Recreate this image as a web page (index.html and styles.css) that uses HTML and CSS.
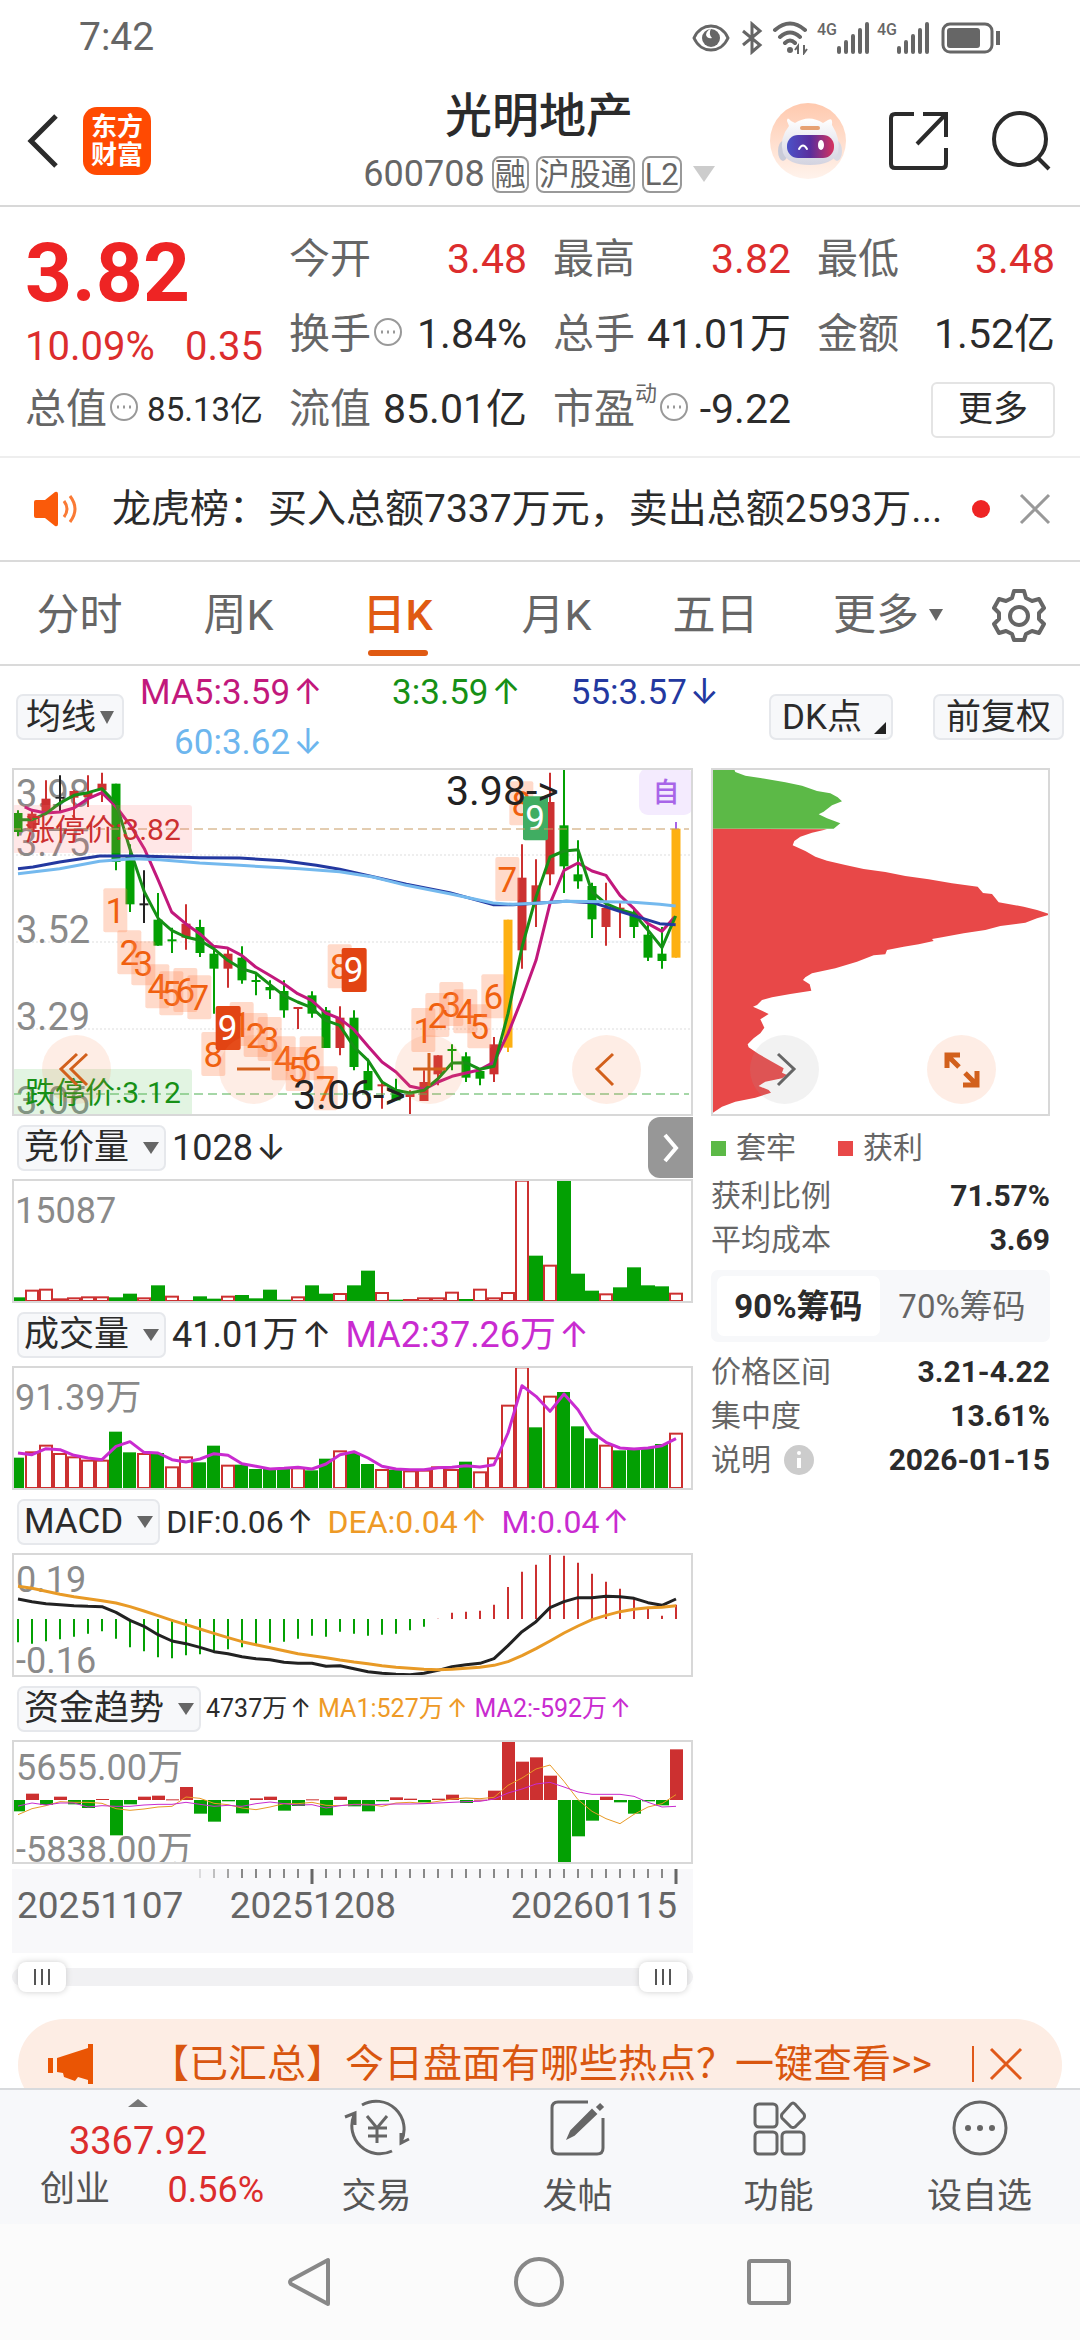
FILE: index.html
```html
<!DOCTYPE html>
<html lang="zh-CN">
<head>
<meta charset="utf-8">
<meta name="viewport" content="width=device-width, initial-scale=1">
<title>光明地产 600708</title>
<link rel="stylesheet" href="styles.css">
</head>
<body>
<div class="app">
  <div class="status">
    <span class="clock">7:42</span>
    <div class="status-icons">
      <svg width="38" height="28" viewBox="0 0 38 28"><path d="M2 14C9-2 29-2 36 14 29 30 9 30 2 14Z" fill="none" stroke="#666" stroke-width="3"/><circle cx="19" cy="14" r="9" fill="#666"/><path d="M19 5a7 7 0 0 0 1 9 5 5 0 0 1-6-3 7 7 0 0 1 5-6Z" fill="#fff"/></svg>
      <svg class="bt" width="22" height="34" viewBox="0 0 22 34"><path d="M2 10 19 24 11 31V3L19 10 2 24" fill="none" stroke="#666" stroke-width="3"/></svg>
      <svg width="38" height="34" viewBox="0 0 38 34"><g fill="none" stroke="#666" stroke-width="4" stroke-linecap="round"><path d="M3 9Q18-4 33 9M8 16Q18 7 28 16M13 22q5-5 10 0"/></g><circle cx="18" cy="29" r="3" fill="#666"/><path d="M26 33V25l-3 4M32 24v8l3-4" fill="none" stroke="#666" stroke-width="2"/></svg>
      <div class="signal"><span>4G</span><svg width="33" height="32" viewBox="0 0 33 32"><path d="M2 26v4M9 20v10M16 14v16M23 8v22M30 2v28" stroke="#666" stroke-width="4" stroke-linecap="round"/></svg></div>
      <div class="signal"><span>4G</span><svg width="33" height="32" viewBox="0 0 33 32"><path d="M2 26v4M9 20v10M16 14v16M23 8v22M30 2v28" stroke="#666" stroke-width="4" stroke-linecap="round"/></svg></div>
      <svg width="60" height="32" viewBox="0 0 60 32"><rect x="2" y="2" width="49" height="28" rx="7" fill="none" stroke="#666" stroke-width="3"/><rect x="6" y="6" width="33" height="20" rx="3" fill="#666"/><path d="M57 9v14" stroke="#666" stroke-width="4"/></svg>
    </div>
  </div>

  <header class="topbar">
    <div class="topbar-left">
      <button class="plain" aria-label="返回"><svg width="34" height="56" viewBox="0 0 34 56"><path d="M30 3 5 28 30 53" fill="none" stroke="#2b2b2b" stroke-width="5"/></svg></button>
      <div class="logo"><span>东方</span><span>财富</span></div>
    </div>
    <div class="stock">
      <h1>光明地产</h1>
      <div class="stock-code"><span>600708</span><i>融</i><i>沪股通</i><i>L2</i><svg width="22" height="16" viewBox="0 0 22 16"><path d="M0 0h22L11 16Z" fill="#ccc"/></svg></div>
    </div>
    <div class="topbar-right">
      <button class="plain" aria-label="智能助手"><svg width="76" height="76" viewBox="0 0 76 76">
        <defs><linearGradient id="halo" x1="0" y1="0" x2="0" y2="1"><stop offset="0" stop-color="#ffc9ae"/><stop offset="1" stop-color="#fff3ec"/></linearGradient><linearGradient id="visor" x1="0" y1="0" x2="1" y2="0"><stop offset="0" stop-color="#4b52c8"/><stop offset=".5" stop-color="#5a2d9c"/><stop offset="1" stop-color="#d6335e"/></linearGradient><linearGradient id="helmet" x1="0" y1="0" x2="0" y2="1"><stop offset="0" stop-color="#fff"/><stop offset="1" stop-color="#d3d3e0"/></linearGradient></defs>
        <circle cx="38" cy="38" r="38" fill="url(#halo)"/><ellipse cx="13" cy="48" rx="5" ry="10" fill="#c9cbd8"/><ellipse cx="67" cy="48" rx="5" ry="10" fill="#d9dae4"/>
        <path d="M17 18q0-5 4 0l4 2q14-9 28 0l5-3q5-3 4 5 9 14 6 28-6 12-28 12T13 50q-4-15 6-27Z" fill="url(#helmet)"/><rect x="17" y="32" width="47" height="23" rx="11" fill="url(#visor)"/><rect x="30" y="23" width="20" height="4" rx="2" fill="#e6a173"/><path d="M29 46q4-7 8 0" stroke="#fff" stroke-width="2" fill="none" stroke-linecap="round"/><ellipse cx="51" cy="42" rx="3" ry="5" fill="#fff"/></svg></button>
      <button class="plain" aria-label="分享"><svg width="60" height="60" viewBox="0 0 60 60"><path d="M25 3H6Q2 3 2 7V53Q2 57 6 57H53Q57 57 57 53V37M34 3H57V26M56 4 28 33" fill="none" stroke="#2b2b2b" stroke-width="4"/></svg></button>
      <button class="plain" aria-label="搜索"><svg width="60" height="62" viewBox="0 0 60 62"><circle cx="28" cy="29" r="26" fill="none" stroke="#2b2b2b" stroke-width="4"/><path d="m46 48 11 11" stroke="#2b2b2b" stroke-width="4"/></svg></button>
    </div>
  </header>

  <main>
    <section class="quote">
      <div class="price"><strong>3.82</strong><div><span>10.09%</span><span>0.35</span></div></div>
      <div class="cell"><span>今开</span><b class="red">3.48</b></div>
      <div class="cell"><span>最高</span><b class="red">3.82</b></div>
      <div class="cell"><span>最低</span><b class="red">3.48</b></div>
      <div class="cell"><span>换手<svg class="dots" viewBox="0 0 30 30"><use href="#dots"/></svg></span><b>1.84%</b></div>
      <div class="cell"><span>总手</span><b>41.01万</b></div>
      <div class="cell"><span>金额</span><b>1.52亿</b></div>
      <div class="cell"><span>总值<svg class="dots" viewBox="0 0 30 30"><use href="#dots"/></svg></span><b class="small">85.13亿</b></div>
      <div class="cell"><span>流值</span><b>85.01亿</b></div>
      <div class="cell"><span>市盈<sup>动</sup><svg class="dots" viewBox="0 0 30 30"><g id="dots"><circle cx="15" cy="15" r="13" fill="none" stroke="#999" stroke-width="2"/><path d="M8 15h2M14 15h2M20 15h2" stroke="#999" stroke-width="3"/></g></svg></span><b>-9.22</b></div>
      <div class="cell end"><button class="more">更多</button></div>
    </section>

    <section class="news">
      <svg width="44" height="36" viewBox="0 0 44 36"><path d="M2 9h9L21 1q3-1 3 2V33q0 3-3 2L11 27H2Q0 27 0 25V11Q0 9 2 9Z" fill="#fa5a0a"/><path d="M30 10q6 8 0 16M36 5q10 13 0 26" fill="none" stroke="#fa7a35" stroke-width="3"/></svg>
      <a href="#news">龙虎榜：买入总额7337万元，卖出总额2593万...</a>
      <span class="dot"></span>
      <button class="plain" aria-label="关闭"><svg width="32" height="32" viewBox="0 0 32 32"><path d="m2 2 28 28M30 2 2 30" stroke="#999" stroke-width="3"/></svg></button>
    </section>

    <nav class="tabs">
      <button>分时</button><button>周K</button><button class="active">日K</button><button>月K</button><button>五日</button>
      <button>更多<svg width="14" height="12" viewBox="0 0 14 12"><path d="M0 0h14L7 12Z" fill="#666"/></svg></button>
      <button aria-label="设置"><svg width="54" height="54" viewBox="0 0 54 54"><path d="M22 3h10l2 7 6 3 7-2 5 9-5 5v6l5 5-5 9-7-2-6 3-2 6H22l-2-6-6-3-7 2-5-9 5-5v-6l-5-5 5-9 7 2 6-3Z" fill="none" stroke="#666" stroke-width="4" stroke-linejoin="round"/><circle cx="27" cy="28" r="9" fill="none" stroke="#666" stroke-width="4"/></svg></button>
    </nav>

    <section class="toolbar">
      <button class="chip">均线<svg width="14" height="13" viewBox="0 0 14 13"><path d="M0 0h14L7 13Z" fill="#666"/></svg></button>
      <div class="averages">
        <span class="magenta">MA5:3.59<em>↑</em></span><span class="green">3:3.59<em>↑</em></span><span class="blue">55:3.57<em>↓</em></span>
        <span class="sky">60:3.62<em>↓</em></span>
      </div>
      <button class="chip dk">DK点<svg width="12" height="12" viewBox="0 0 12 12"><path d="M12 0v12H0Z" fill="#222"/></svg></button>
      <button class="chip">前复权</button>
    </section>

    <section class="board">
      <div class="charts">
        <div class="chart-box">
          <svg id="kline" class="chart" viewBox="0 0 681 348"></svg>
          <div class="chart-tools">
            <button class="round" aria-label="快速后退"><svg viewBox="0 0 69 69"><path d="M35 19 19 34 35 50M45 19 29 34 45 50"/></svg></button>
            <button class="round" aria-label="缩小"><svg viewBox="0 0 69 69"><path d="M18 34H51"/></svg></button>
            <button class="round" aria-label="放大"><svg viewBox="0 0 69 69"><path d="M18 34H51M34 18V51"/></svg></button>
            <button class="round" aria-label="后退"><svg viewBox="0 0 69 69"><path d="M41 19 25 34 41 50"/></svg></button>
          </div>
        </div>
        <div class="indicator">
          <button class="chip">竞价量<svg width="16" height="12" viewBox="0 0 16 12"><path d="M0 0h16L8 12Z" fill="#666"/></svg></button><span>1028<em>↓</em></span>
          <button class="drawer" aria-label="收起"><svg width="18" height="30" viewBox="0 0 18 30"><path d="M3 2 14 15 3 28" fill="none" stroke="#fff" stroke-width="4"/></svg></button>
        </div>
        <svg id="auction" class="chart" viewBox="0 0 681 124"></svg>
        <div class="indicator">
          <button class="chip">成交量<svg width="16" height="12" viewBox="0 0 16 12"><path d="M0 0h16L8 12Z" fill="#666"/></svg></button><span>41.01万<em>↑</em></span><span class="violet">MA2:37.26万<em>↑</em></span>
        </div>
        <svg id="volume" class="chart" viewBox="0 0 681 124"></svg>
        <div class="indicator mid">
          <button class="chip">MACD<svg width="16" height="12" viewBox="0 0 16 12"><path d="M0 0h16L8 12Z" fill="#666"/></svg></button><span>DIF:0.06<em>↑</em></span><span class="orange">DEA:0.04<em>↑</em></span><span class="violet">M:0.04<em>↑</em></span>
        </div>
        <svg id="macd" class="chart" viewBox="0 0 681 124"></svg>
        <div class="indicator narrow">
          <button class="chip">资金趋势<svg width="16" height="12" viewBox="0 0 16 12"><path d="M0 0h16L8 12Z" fill="#666"/></svg></button><span>4737万<em>↑</em></span><span class="orange">MA1:527万<em>↑</em></span><span class="violet">MA2:-592万<em>↑</em></span>
        </div>
        <svg id="capital" class="chart" viewBox="0 0 681 124"></svg>
        <svg id="axis" class="axis" viewBox="0 0 681 84"></svg>
        <div class="range"><span class="thumb"></span><span class="thumb"></span></div>
      </div>

      <aside>
        <div class="chart-box">
          <svg id="chips" class="chart" viewBox="0 0 339 348"></svg>
          <div class="chart-tools chips-tools">
            <button class="round grey" aria-label="前进"><svg viewBox="0 0 69 69"><path d="M28 19 44 34 28 50"/></svg></button>
            <button class="round expand" aria-label="全屏"><svg viewBox="0 0 69 69"><path d="M32 32 20 20M20 33V20H33M38 38 50 50M50 36V50H36"/></svg></button>
          </div>
        </div>
        <div class="legend"><span>套牢</span><span class="gain">获利</span></div>
        <dl><div><dt>获利比例</dt><dd>71.57%</dd></div><div><dt>平均成本</dt><dd>3.69</dd></div></dl>
        <div class="toggle"><button class="on">90%筹码</button><button>70%筹码</button></div>
        <dl><div><dt>价格区间</dt><dd>3.21-4.22</dd></div><div><dt>集中度</dt><dd>13.61%</dd></div>
        <div><dt>说明<svg width="30" height="30" viewBox="0 0 30 30"><circle cx="15" cy="15" r="15" fill="#ccc"/><circle cx="15" cy="8" r="2" fill="#fff"/><path d="M15 13v10" stroke="#fff" stroke-width="4"/></svg></dt><dd>2026-01-15</dd></div></dl>
      </aside>
    </section>

    <section class="banner">
      <svg width="46" height="40" viewBox="0 0 46 40"><path d="M0 14h5v15H0ZM9 14 40 4V0h5V40H40V36L30 33l-3 4-11-4-1-4-6-1Z" fill="#ea5504"/></svg>
      <a href="#hot">【已汇总】今日盘面有哪些热点？一键查看&gt;&gt;</a>
      <i></i>
      <button class="plain" aria-label="关闭"><svg width="34" height="34" viewBox="0 0 34 34"><path d="m2 2 30 30M32 2 2 32" stroke="#e0591a" stroke-width="3"/></svg></button>
    </section>
  </main>

  <footer class="actions">
    <a class="index" href="#index"><svg width="20" height="8" viewBox="0 0 20 8"><path d="M10 0 20 8H0Z" fill="#777"/></svg><strong>3367.92</strong><div><span>创业</span><b>0.56%</b></div></a>
    <a href="#trade"><svg width="66" height="58" viewBox="0 0 66 58"><g fill="none" stroke="#666" stroke-width="3"><path d="M18 6A28 28 0 0 1 57 43M48 52A28 28 0 0 1 10 16M1 18 11 14V26M65 40 57 44V34M23 17 33 29 43 17M33 29V44M24 29H43M24 37H43"/></g></svg>交易</a>
    <a href="#post"><svg width="56" height="58" viewBox="0 0 56 58"><path d="M38 3H8Q2 3 2 9V49Q2 55 8 55H47Q53 55 53 49V19" fill="none" stroke="#666" stroke-width="3"/><path d="M42 11 46 15 24 36 18 39 21 32Z" fill="#666" stroke="#666" stroke-width="2"/><path d="m48 6 4 4" stroke="#666" stroke-width="6"/></svg>发帖</a>
    <a href="#tools"><svg width="54" height="58" viewBox="0 0 54 58"><g fill="none" stroke="#666" stroke-width="3"><rect x="3" y="5" width="22" height="23" rx="4"/><rect x="3" y="33" width="22" height="22" rx="4"/><rect x="30" y="33" width="22" height="22" rx="4"/><path d="M39 5q2-2 4 0l9 10q1 2 0 4l-9 9q-2 1-4 0l-9-9q-1-2 0-4Z"/></g></svg>功能</a>
    <a href="#watch"><svg width="58" height="58" viewBox="0 0 58 58"><circle cx="29" cy="29" r="26" fill="none" stroke="#666" stroke-width="3"/><circle cx="17" cy="29" r="3" fill="#666"/><circle cx="29" cy="29" r="3" fill="#666"/><circle cx="41" cy="29" r="3" fill="#666"/></svg>设自选</a>
  </footer>
  <div class="sysnav">
    <svg width="46" height="52" viewBox="0 0 46 52"><path d="M42 4V48L5 28Q3 26 5 24Z" fill="none" stroke="#888" stroke-width="4" stroke-linejoin="round"/></svg>
    <svg width="52" height="52" viewBox="0 0 52 52"><circle cx="26" cy="26" r="23" fill="none" stroke="#888" stroke-width="4"/></svg>
    <svg width="46" height="48" viewBox="0 0 46 48"><rect x="3" y="3" width="40" height="42" rx="2" fill="none" stroke="#888" stroke-width="4"/></svg>
  </div>
</div>
<script src="charts.js"></script>
</body>
</html>
```

FILE: styles.css
```css
* { box-sizing: border-box; }
body { margin: 0; background: #fff; color: #2b2b2b; font-family: Roboto, "Noto Sans CJK SC", sans-serif; line-height: 1; }
button { border: 0; padding: 0; margin: 0; background: none; font: inherit; color: inherit; }
a { color: inherit; text-decoration: none; }
h1, dl, dd { margin: 0; }
i, em { font-style: normal; }
em { font-family: Inter, sans-serif; font-weight: 400; margin-left: 3px; }
svg { display: block; flex: none; }
.plain { display: block; flex: none; }
.app { height: 100vh; display: flex; flex-direction: column; }
main { flex: 1; min-height: 0; overflow: hidden; }

.status { height: 75px; flex: none; padding: 0 79px; display: flex; justify-content: space-between; align-items: center; color: #666; }
.clock { font-size: 39px; }
.status-icons { display: flex; align-items: center; gap: 11px; }
.status-icons .bt { margin-right: -2px; }
.signal { display: flex; align-items: flex-start; margin-left: -4px; }
.signal span { font-size: 16px; font-weight: 500; }

.topbar { height: 132px; flex: none; display: flex; align-items: center; justify-content: space-between; padding: 2px 28px 0 26px; border-bottom: 2px solid #d8d8d8; }
.topbar-left, .topbar-right { flex: 1; display: flex; align-items: center; }
.topbar-left { gap: 23px; }
.topbar-right { justify-content: flex-end; gap: 43px; }
.logo { width: 68px; height: 68px; border-radius: 14px; background: #ff4a02; color: #fff; font-size: 26px; line-height: 28px; font-weight: 700; display: flex; flex-direction: column; align-items: center; justify-content: center; }
.stock { display: flex; flex-direction: column; align-items: center; gap: 12px; }
.stock h1 { font-size: 47px; font-weight: 500; line-height: 54px; }
.stock-code { display: flex; align-items: center; gap: 7px; font-size: 36px; color: #666; height: 38px; }
.stock-code i { border: 2px solid #999; border-radius: 8px; font-size: 31px; line-height: 33px; padding: 0 1px; }
.stock-code svg { margin-left: 4px; }

.quote { display: grid; grid-template-columns: repeat(4, 1fr); grid-auto-rows: 75px; column-gap: 26px; padding: 15px 25px 9px; border-bottom: 2px solid #eee; font-size: 41px; }
.price { grid-row: span 2; color: #ee2424; padding-top: 18px; }
.price strong { display: block; font-size: 82px; font-weight: 700; line-height: 66px; }
.price div { display: flex; justify-content: space-between; margin-top: 20px; line-height: 42px; font-size: 40px; color: #dc2d2d; }
.cell { display: flex; align-items: center; justify-content: space-between; white-space: nowrap; }
.cell > span { color: #666; display: flex; align-items: center; }
.cell b { font-weight: 400; font-size: 41px; }
.cell .red { color: #dc2d2d; }
.cell .small { font-size: 33px; }
.cell sup { font-size: 22px; align-self: flex-start; line-height: 10px; }
.dots { width: 30px; height: 30px; margin: 0 0 6px 2px; }
.cell.end { justify-content: flex-end; }
.more { width: 124px; height: 56px; border: 2px solid #e4e4e4; border-radius: 6px; font-size: 35px; }

.news { display: flex; align-items: center; height: 104px; padding: 0 29px 0 34px; border-bottom: 2px solid #dadada; font-size: 39px; }
.news a { flex: 1; margin-left: 34px; white-space: nowrap; }
.dot { width: 18px; height: 18px; border-radius: 50%; background: #ee2424; margin-right: 29px; }

.tabs { display: grid; grid-template-columns: repeat(5, 159fr) 186fr 75fr 24fr; height: 104px; border-bottom: 2px solid #dadada; font-size: 43px; color: #666; }
.tabs button { display: flex; align-items: center; justify-content: center; gap: 10px; position: relative; padding-top: 4px; }
.tabs .active { color: #e05a12; font-weight: 500; }
.tabs .active::after { content: ""; position: absolute; bottom: 8px; width: 60px; height: 6px; border-radius: 3px; background: #e05a12; }

.toolbar { display: flex; align-items: center; height: 102px; padding: 0 16px; font-size: 35px; }
.chip { display: flex; align-items: center; height: 46px; padding: 0 5px; border: 2px solid #e6e8ec; border-radius: 7px; background: #f7f8fa; font-size: 35px; white-space: nowrap; }
.toolbar .chip { padding: 0 11px; }
.toolbar .chip:first-child { padding: 0 8px; gap: 4px; }
.toolbar .dk { margin: 0 40px 0 50px; gap: 12px; padding-right: 5px; }
.dk svg { align-self: flex-end; margin-bottom: 4px; }
.averages { flex: 1; display: grid; grid-template-columns: repeat(3, 1fr); line-height: 48px; text-align: right; white-space: nowrap; }
.averages span:first-child, .averages span:nth-child(4) { margin-left: -20px; }
.magenta { color: #c2187c; }
.green { color: #169016; }
.blue { color: #2338a0; }
.sky { color: #6db6ee; }
.violet { color: #c92bd0; }
.orange { color: #ee9a26; }

.board { display: grid; grid-template-columns: 681fr 339fr; gap: 18px; padding: 0 30px 0 12px; }
.chart { width: 100%; outline: 2px solid #d8d8d8; outline-offset: -2px; }
.chart-box { position: relative; }
.chart-tools { position: absolute; left: 0; right: 0; bottom: 12px; padding: 0 52px 0 30px; display: flex; justify-content: space-between; }
.chips-tools { padding: 0 54px 0 39px; }
.round { width: 69px; height: 69px; border-radius: 50%; background: rgba(250, 130, 70, .14); }
.round path { fill: none; stroke: #d2601c; stroke-width: 3; }
.round.expand path { stroke-width: 5; }
.round.grey { background: rgba(160, 160, 160, .14); }
.round.grey path { stroke: #666; }
.indicator { display: flex; align-items: center; height: 63px; padding-left: 5px; gap: 6px; font-size: 36px; white-space: nowrap; }
.indicator .chip { gap: 14px; }
.indicator span + span { margin-left: 8px; }
.indicator.mid { font-size: 32px; }
.indicator.narrow { font-size: 25px; gap: 5px; }
.indicator.narrow span + span { margin-left: 2px; }
.drawer { margin-left: auto; width: 45px; height: 61px; border-radius: 12px 0 0 12px; background: #979797; display: flex; align-items: center; justify-content: center; }
.axis { width: 100%; margin-top: 5px; background: #f8f8fa; }
.range { margin: 15px 0 33px; height: 18px; border-radius: 9px; background: #f1f1f3; display: flex; align-items: center; justify-content: space-between; padding: 0 6px; }
.thumb { width: 48px; height: 30px; border-radius: 8px; background: linear-gradient(#555, #555) 16px 50% / 2px 16px no-repeat, linear-gradient(#555, #555) 23px 50% / 2px 16px no-repeat, linear-gradient(#555, #555) 30px 50% / 2px 16px no-repeat, #fff; box-shadow: 0 0 6px #ccc; }

aside { font-size: 30px; color: #666; }
.legend { display: flex; gap: 42px; height: 64px; align-items: center; }
.legend span { display: flex; align-items: center; gap: 10px; }
.legend span::before { content: ""; width: 15px; height: 15px; background: #5cb947; }
.legend .gain::before { background: #e84848; }
dl div { display: flex; justify-content: space-between; align-items: center; height: 44px; }
dl dt { display: flex; gap: 13px; }
dl dd { color: #2b2b2b; font-weight: 700; }
.legend + dl { margin-top: -6px; }
.toggle { display: grid; grid-template-columns: 163fr 164fr; height: 72px; margin: 8px 0; padding: 6px; border-radius: 7px; background: #f7f8fa; font-size: 33px; }
.toggle .on { background: #fff; border-radius: 7px; font-weight: 700; color: #2b2b2b; }

.banner { margin: 0 18px; height: 92px; border-radius: 46px; background: #fdede4; color: #d9560f; display: flex; align-items: center; font-size: 39px; padding: 0 39px 2px 30px; }
.banner a { flex: 1; margin-left: 56px; white-space: nowrap; }
.banner i { width: 2px; height: 36px; background: #e0591a; margin-right: 15px; }

.actions { flex: none; height: 136px; border-top: 2px solid #d8dadd; background: #f7f8fa; color: #555; display: grid; grid-template-columns: 276fr repeat(4, 201fr); font-size: 35px; }
.actions a { display: flex; flex-direction: column; align-items: center; gap: 22px; padding-top: 9px; }
.actions .index { gap: 0; color: #dc2d2d; }
.index strong { font-weight: 400; font-size: 38px; margin: 15px 0; }
.index div { width: 100%; padding: 0 12px 0 40px; display: flex; justify-content: space-between; line-height: 30px; }
.index span { color: #555; }
.index b { font-weight: 400; font-size: 36px; }
.sysnav { flex: none; height: 116px; background: #fbfbfb; display: flex; align-items: center; justify-content: space-between; padding: 0 288px 0 286px; }

.lab { font-size: 38px; fill: #8a8a8a; }
.lab-sm { font-size: 36px; fill: #8a8a8a; }
.mark { font-size: 41px; fill: #222; }
.limit { font-size: 30px; }
.count { font-size: 35px; text-anchor: middle; }
.self { font-size: 27px; font-weight: 500; text-anchor: middle; fill: #a865e8; }
.date { font-size: 37px; fill: #666; }
```

FILE: charts.js
```js
const RED = '#cc3030', GREEN = '#03a003', DARK = '#222', GOLD = '#fdb012';
const cx = i => 6 + 14 * i;
const rect = (x, y, w, h, fill, extra = '') => `<rect x="${x}" y="${y}" width="${w}" height="${h}" fill="${fill}" ${extra}/>`;
const seg = (x1, y1, x2, y2, color, w = 2, extra = '') => `<path d="M${x1} ${y1}L${x2} ${y2}" stroke="${color}" stroke-width="${w}" ${extra}/>`;
const label = (x, y, cls, text, extra = '') => `<text x="${x}" y="${y}" class="${cls}" ${extra}>${text}</text>`;
const path = (pts, color, w = 3) => `<polyline points="${pts.join(' ')}" fill="none" stroke="${color}" stroke-width="${w}" stroke-linejoin="round"/>`;
const put = (id, html) => { document.getElementById(id).innerHTML = html; };
const pairs = s => s.trim().split(/\s+/).map(p => p.split(',').map(Number));

/* Daily candles: colour, high, body top, body bottom, low (thirds of a pixel). */
const candles = `g150,158,215,228 r150,160,205,210 r60,115,160,160 k45,110,115,155 r90,92,112,175 r45,95,110,140 r37,70,90,125
g70,70,305,330 g252,290,432,455 k330,429,435,488 g398,478,556,556 g502,537,543,578 r432,490,532,568 g478,500,578,590 g560,580,625,760
r565,580,625,682 g558,592,660,670 g640,659,665,705 g660,680,690,716 g660,692,750,772 r740,740,746,806 g693,705,760,772 g740,750,863,863
r738,772,863,885 g750,772,920,930 g895,932,990,990 r960,972,978,1045 g955,988,1020,1020 r990,1000,1010,1067 r930,965,1022,1022
r885,885,942,975 g852,866,872,930 g876,888,952,965 g925,932,955,975 r830,852,942,965 y478,478,862,875 r252,352,570,625 r297,375,425,500
r37,125,342,375 g24,195,318,398 g240,342,363,385 g367,377,477,533 r367,443,500,556 r428,442,447,533 g445,455,500,533 g490,523,592,602
g500,580,602,625 y205,205,592,592`.trim().split(/\s+/);
const ink = { g: GREEN, r: RED, k: DARK, y: GOLD };
const py = v => (v - 23) / 3, px = v => (v - 37) / 3;
const curve = s => pairs(s).map(([x, y]) => [px(x), py(y)].join());

let k = '';
[87, 174, 261].forEach(y => { k += seg(0, y, 681, y, '#ddd', 1, 'stroke-dasharray="2 2"'); });
k += label(4, 39, 'lab', '3.98') + label(4, 88, 'lab', '3.75') + label(4, 175, 'lab', '3.52') + label(4, 262, 'lab', '3.29') + label(4, 346, 'lab', '3.06');
candles.forEach((c, i) => {
  const [h, t, b, l] = c.slice(1).split(',').map(v => py(+v));
  k += seg(cx(i), h, cx(i), l, ink[c[0]]) + rect(cx(i) - 4.5, t, 9, b - t, ink[c[0]]);
});
k += seg(664, 54, 664, 61, '#a865e8');
const counts = `1,311,384 2,353,510 3,395,543 4,437,612 5,479,633 6,521,623 7,563,645 8,605,815 1,690,725 2,732,758 3,774,770 4,816,828 5,858,860
6,900,828 7,942,918 8,984,552 1,1235,743 2,1277,698 3,1319,665 4,1361,687 5,1403,732 6,1445,642 7,1487,290 8,1529,63`;
pairs(counts).forEach(([n, x, y]) => {
  k += rect(px(x), py(y), 24, 44, '#ff8450', 'rx="2" opacity=".3"') + label(px(x) + 12, py(y) + 35, 'count', n, 'fill="#f0600f"');
});
[[648, 737, '#e24413'], [1026, 563, '#e24413'], [1570, 108, '#40ad62']].forEach(([x, y, c]) => {
  k += rect(px(x), py(y), 25, 44, c, 'rx="2"') + label(px(x) + 12, py(y) + 34, 'count', 9, 'fill="#fff"');
});
k += path(curve('75,140 97,150 139,158 181,155 223,143 265,115 307,97 350,140 392,195 434,265 476,360 516,455 558,490 600,520 642,558 684,563 726,585 768,620 810,645 852,670 894,700 936,720 978,758 1020,775 1063,808 1105,858 1147,905 1189,935 1231,978 1273,987 1315,965 1357,948 1399,938 1441,928 1483,905 1525,820 1567,715 1609,600 1651,430 1693,330 1735,308 1777,332 1819,345 1861,405 1903,445 1945,490 1987,513 2025,470'), '#c2187c');
k += path(curve('55,178 97,178 139,160 181,128 223,105 265,97 307,85 350,130 392,270 434,395 476,475 516,510 558,530 600,540 642,565 684,600 726,625 768,638 810,672 852,705 894,725 936,742 978,780 1020,795 1063,860 1105,900 1147,965 1189,990 1231,998 1273,990 1315,955 1357,908 1399,907 1441,927 1483,918 1525,760 1567,560 1609,410 1651,290 1693,272 1735,268 1777,395 1819,430 1861,448 1903,460 1945,510 1987,562 2028,467'), '#169016');
k += path(curve('55,325 100,320 180,305 300,287 420,287 600,292 720,293 850,301 950,315 1020,327 1100,345 1220,372 1350,397 1480,433 1540,433 1620,428 1700,423 1780,427 1860,453 1980,490 2028,493'), '#2338a0');
k += path(curve('55,340 180,325 300,303 400,295 480,298 600,308 720,315 900,325 1020,334 1120,350 1220,375 1350,400 1480,428 1540,432 1620,428 1700,423 1820,424 1900,426 1980,432 2028,437'), '#74b9ee');
k += seg(0, 61, 677, 61, '#c79a63', 1, 'stroke-dasharray="9 5"') + seg(0, 326, 677, 326, '#4caf50', 1, 'stroke-dasharray="9 5"');
k += rect(0, 37, 180, 48, '#ff6e6e', 'rx="3" opacity=".17"') + label(13, 72, 'limit', '涨停价:3.82', `fill="${RED}"`);
k += rect(0, 301, 180, 47, '#5cc35c', 'rx="3" opacity=".18"') + label(13, 335, 'limit', '跌停价:3.12', 'fill="#169016"');
k += label(434, 37, 'mark', '3.98-&gt;') + label(281, 341, 'mark', '3.06-&gt;');
k += rect(627, 0, 54, 47, '#f4ebfe', 'rx="9"') + label(654, 34, 'self', '自');
put('kline', k);

/* Volume-style panes: colour and top of each bar. */
const bars = (s, top, outline) => s.trim().split(/\s+/).map((v, i) => {
  const y = (v.slice(1) - top) / 3, x = Math.max(cx(i) - 7, 0), w = cx(i) + 7 - x;
  return v[0] === 'g' ? rect(x, y, w - outline, 122 - y, GREEN) : rect(x + 1, y + 1, w - 2, Math.max(121 - y, 1), '#fff', `stroke="${RED}" stroke-width="2"`);
}).join('');
const series = (s, top) => s.trim().split(/\s+/).map((v, i) => [cx(i), (v - top) / 3].join());

put('auction', bars('g563 r540 r537 r566 r563 r560 r560 g563 g552 r563 g527 r558 r571 g560 g567 r558 g556 g566 g540 g570 r560 g527 g552 r550 g527 g483 r547 g570 r568 r563 r563 r546 g568 r537 r563 r547 r210 g438 r465 g210 g492 g543 r551 g533 g473 g527 g530 r549', 208, 0) + label(3, 44, 'lab-sm', '15087'));
put('volume', label(3, 44, 'lab-sm', '91.39万') + bars('g1044 r1025 r1005 r1030 r1040 r1050 r1050 g966 g1028 r1030 g1030 r1070 r1040 g1058 g1008 r1065 g1065 g1078 g1078 g1075 r1073 g1082 g1047 r1022 g1030 g1063 r1078 g1080 r1082 r1080 r1070 r1078 g1056 r1085 r1043 r885 r770 g953 r858 g847 g950 g986 r1005 g1022 g1018 g1015 g1003 r969', 769, 1)
  + path(series('1030 1035 1017 1020 1037 1045 1050 1010 996 1028 1030 1050 1057 1048 1032 1037 1062 1070 1078 1076 1073 1078 1063 1035 1026 1045 1070 1078 1080 1080 1074 1073 1068 1072 1065 970 828 860 905 853 900 968 998 1015 1018 1015 1008 987', 769), '#c92bd0'));

const hist = '428 432 425 419 411 402 395 417 443 455 473 476 467 464 460 449 443 437 429 426 417 408 411 396 402 408 405 402 392 381 357 339 336 333 315 262 216 195 160 168 189 222 246 267 297 325 348 315'.split(' ');
put('macd', hist.map((v, i) => seg(cx(i), 66, cx(i), (v - 160) / 3, v > 357 ? GREEN : RED)).join('')
  + path(series('298 306 312 315 318 320 321 338 362 380 405 424 432 443 456 462 471 477 480 488 491 491 500 498 507 516 521 524 525 521 512 501 495 491 477 438 396 366 324 306 294 294 290 291 296 309 317 298', 160), DARK)
  + label(4, 39, 'lab-sm', '0.19') + label(4, 120, 'lab-sm', '-0.16')
  + path(series('260 266 275 284 291 297 303 310 321 334 348 362 375 388 401 414 426 435 444 453 462 468 474 481 487 492 498 503 506 509 510 509 506 503 497 486 468 447 424 400 379 360 347 336 329 324 323 318', 160), '#e89a26'));

const flow = '935 882 916 891 914 925 898 1007 914 891 888 899 862 942 966 905 941 896 891 933 919 899 947 891 920 935 905 893 897 908 897 885 910 900 873 721 786 773 828 1088 1010 963 891 908 942 905 917 749'.split(' ');
put('capital', label(4, 40, 'lab-sm', '5655.00万') + label(4, 122, 'lab-sm', '-5838.00万') + flow.map((v, i) => {
  const y = (v - 721) / 3, x = Math.max(cx(i) - 6, 0);
  return rect(x, Math.min(y, 60), 13, Math.max(Math.abs(y - 60), 1), v > 902 ? GREEN : RED);
}).join('')
  + path(series('945 927 918 906 908 908 911 927 932 928 922 920 892 896 911 915 925 930 922 912 912 908 917 918 914 914 920 910 908 911 905 898 895 897 893 857 835 808 796 845 900 935 957 972 944 922 912 885', 721), '#e89a26', 1)
  + path(series('919 910 916 910 910 922 918 920 920 916 914 914 908 914 920 917 920 912 907 912 916 915 925 918 915 916 914 913 913 912 910 908 906 905 898 880 868 853 848 862 877 884 884 884 890 908 922 920', 721), '#c92bd0', 1));

let a = '';
for (let i = 13; i < 48; i++) a += i === 21 || i === 47 ? seg(cx(i), 0, cx(i), 15, '#666', 3) : seg(cx(i), 0, cx(i), 9, '#888', 2, `opacity="${Math.min(1, (i - 12) / 4)}"`);
a += label(5, 49, 'date', '20251107') + label(301, 49, 'date', '20251208', 'text-anchor="middle"') + label(665, 49, 'date', '20260115', 'text-anchor="end"');
put('axis', a);

/* Cost distribution: trapped chips above the price, profitable below. */
const area = (s, fill) => `<polygon fill="${fill}" points="${pairs(s).map(([x, y]) => [(x - 62) / 3, (y - 24) / 3].join()).join(' ')}"/>`;
put('chips', area('62,24 130,24 135,36 165,47 215,55 285,67 335,77 380,93 420,100 442,112 455,124 425,136 400,155 385,163 410,175 450,190 430,206 62,206', '#5cb947')
  + area('62,206 410,208 365,218 330,230 312,243 307,256 345,273 375,290 410,302 465,315 520,327 585,336 645,348 715,358 785,370 862,380 878,399 905,402 925,427 1000,440 1040,450 1080,463 1040,475 1005,488 930,498 885,510 820,520 755,532 725,537 730,543 685,553 640,560 590,570 585,583 550,586 500,605 435,625 365,640 345,652 338,660 358,673 363,692 300,702 245,712 215,720 200,735 188,740 215,752 235,762 210,778 222,803 210,820 190,835 172,853 175,862 205,882 240,902 280,925 275,938 290,945 275,955 225,965 205,978 235,990 242,998 195,1013 135,1025 95,1040 62,1062', '#e84848'));
```
